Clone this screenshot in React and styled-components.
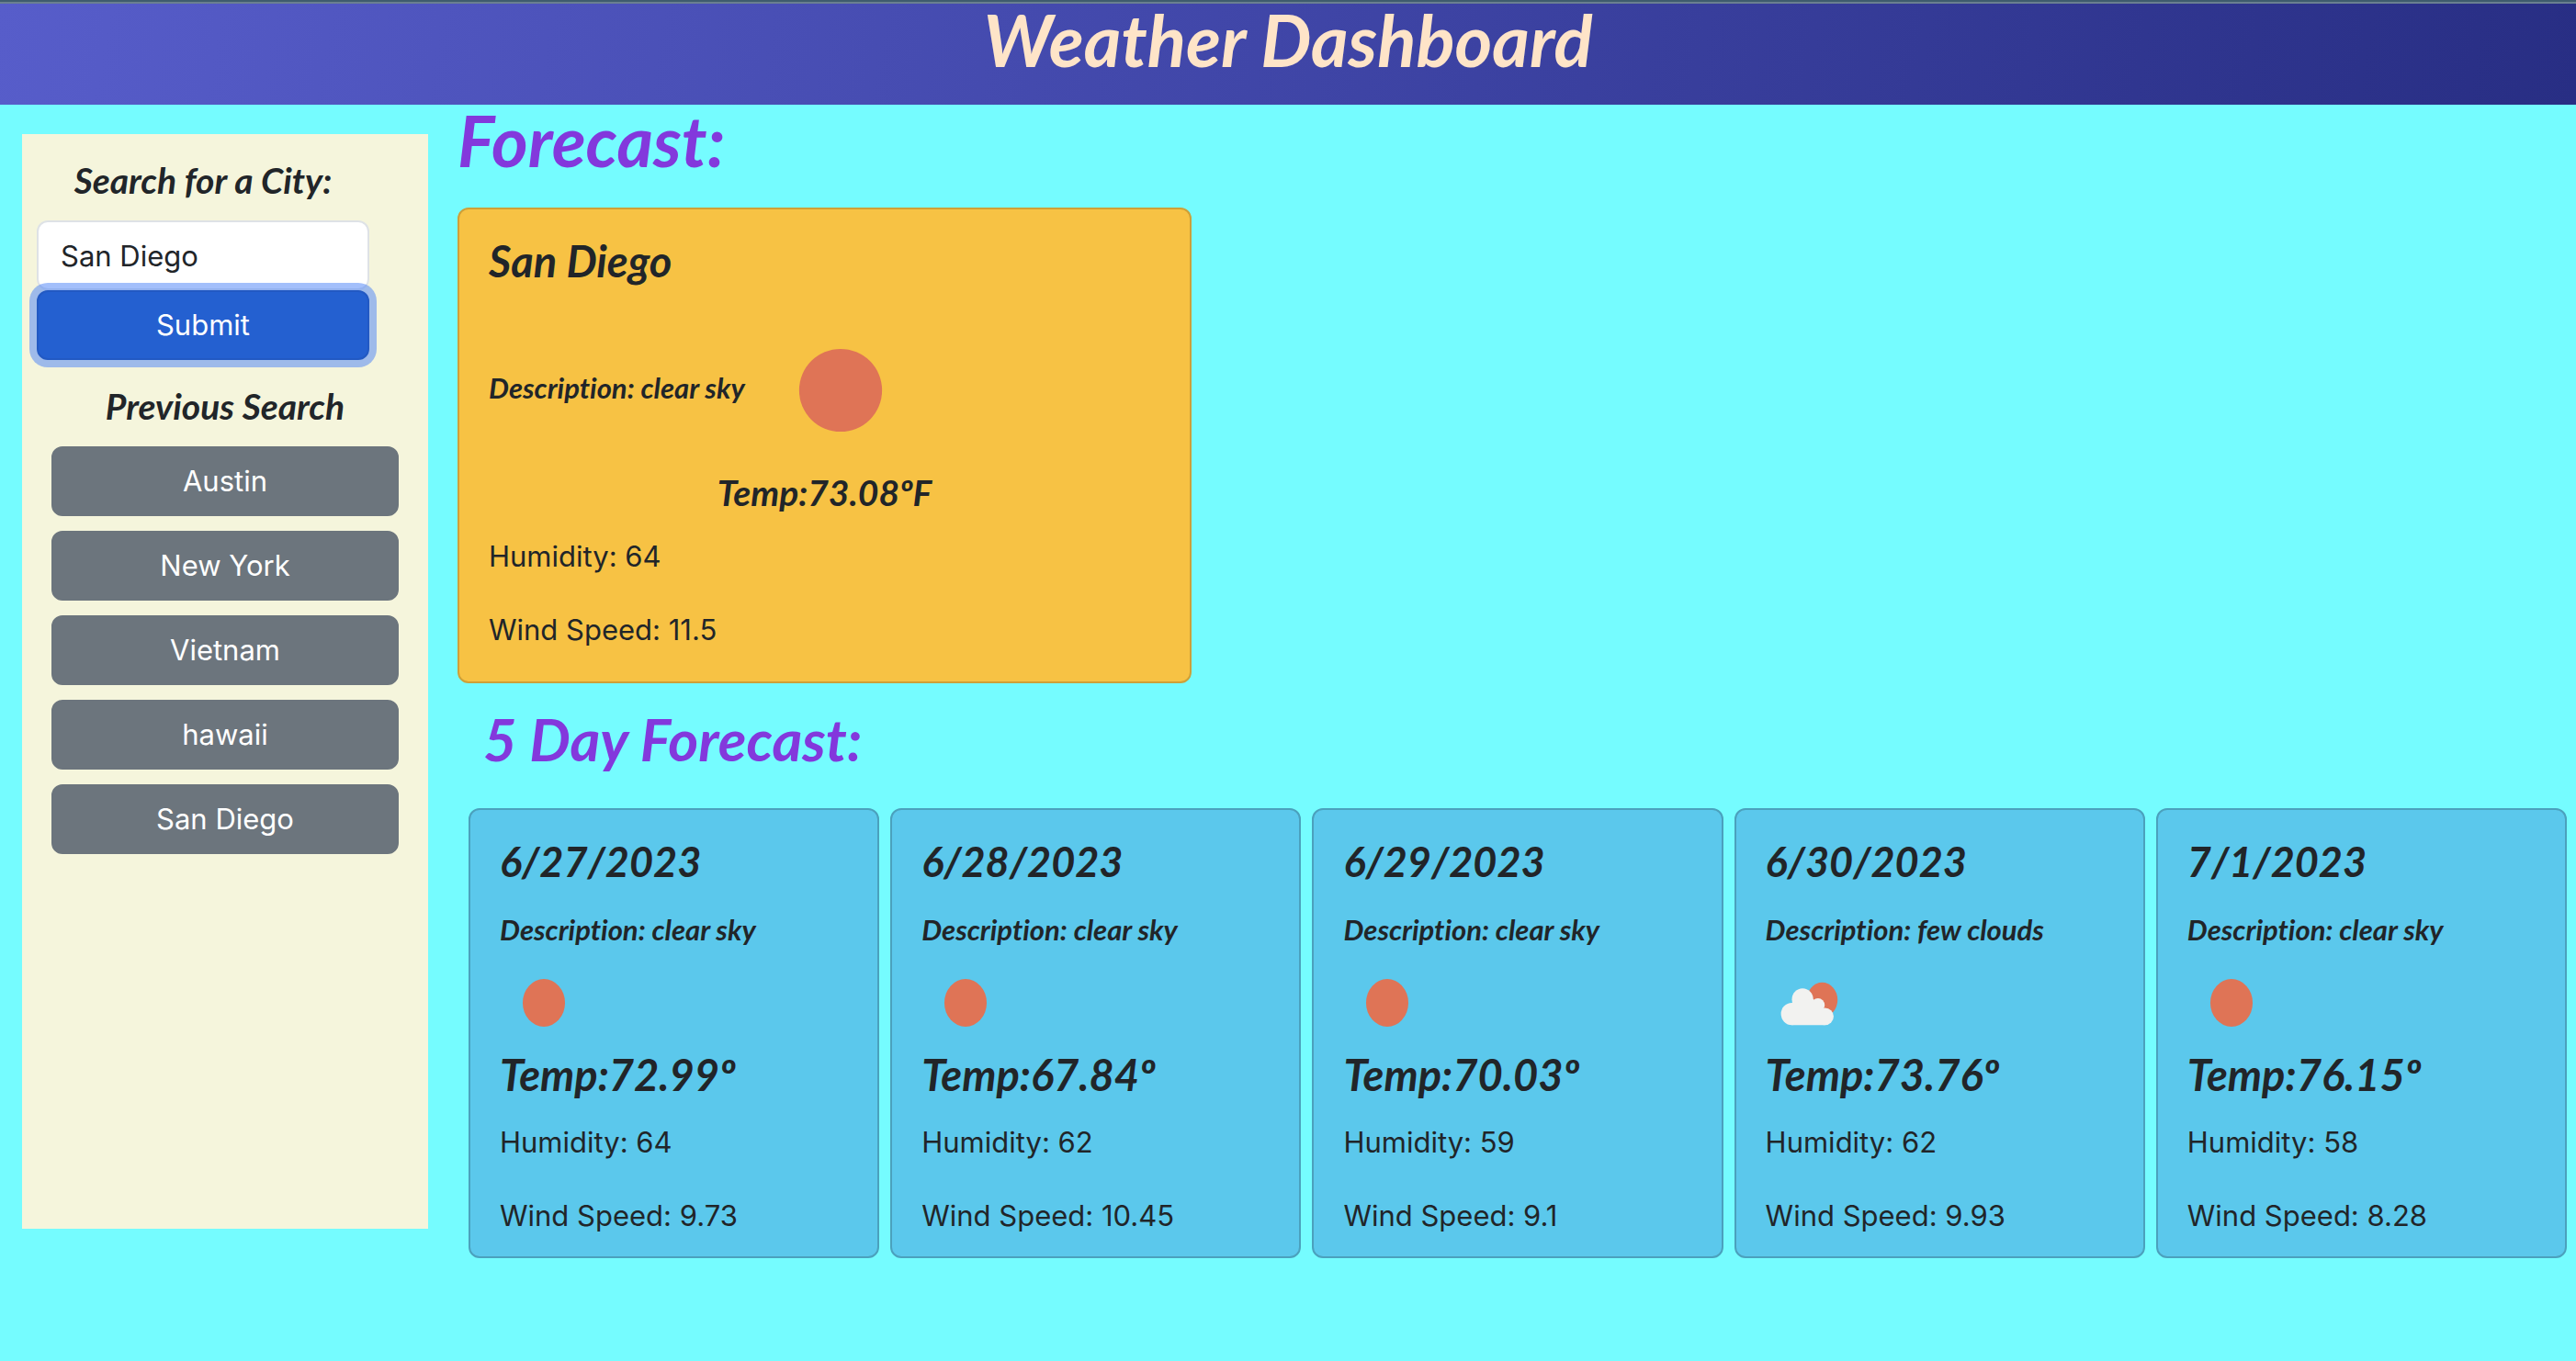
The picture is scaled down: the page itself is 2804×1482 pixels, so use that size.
import React, { useState } from "react";
import styled, { createGlobalStyle, css } from "styled-components";

const GlobalStyle = createGlobalStyle`
  *, *::before, *::after { box-sizing: border-box; }
  body {
    margin: 0;
    min-height: 100vh;
    background: #75fcff;
    color: #212529;
    font: 400 31px/48px Inter, "Liberation Sans", sans-serif;
  }
`;

const heading = css`
  margin: 0;
  font-family: Lato, "Open Sans", sans-serif;
  font-style: italic;
  font-weight: 700;
  font-variant-ligatures: none;
`;

const Header = styled.header`
  height: 114px;
  border-top: 2px solid #3f5c6e;
  background: linear-gradient(100deg, #575dca, #282e84);
  text-align: center;
`;

const Title = styled.h1`
  ${heading}
  border-top: 2px solid #6a8090;
  color: #fee4c8;
  font-size: 78px;
  line-height: 78px;
`;

const Layout = styled.div`
  display: grid;
  grid-template-columns: 442px minmax(0, 1fr);
  gap: 32px;
  align-items: start;
  padding: 0 10px 0 24px;
`;

const Sidebar = styled.aside`
  min-height: 1192px;
  margin-top: 32px;
  padding: 30px 32px 24px 16px;
  background: #f5f5dc;
`;

const SearchForm = styled.form`
  display: flex;
  flex-direction: column;
  margin-right: 32px;
  text-align: center;
`;

const SmallHeading = styled.h5`
  ${heading}
  font-size: 39px;
  line-height: 40px;
  text-align: center;
`;

const Field = styled.input`
  height: 76px;
  margin-top: 24px;
  padding: 12px 24px;
  border: 2px solid #dee2e6;
  border-radius: 12px;
  background: #fff;
  color: inherit;
  font: inherit;
`;

const Button = styled.button`
  height: 76px;
  padding: 12px 24px;
  border: 2px solid #6c757d;
  border-radius: 12px;
  background: #6c757d;
  color: #fff;
  font: inherit;
`;

const SubmitButton = styled(Button)`
  border-color: #2259c3;
  background: #2460d0;
  box-shadow: 0 0 0 8px rgba(72, 127, 247, 0.5);
`;

const History = styled.section`
  padding: 30px 0 0 16px;
`;

const CityList = styled.div`
  display: flex;
  flex-direction: column;
  gap: 16px;
  padding-top: 24px;
`;

const Main = styled.main`
  display: flex;
  flex-direction: column;
`;

const Forecast = styled.h1`
  ${heading}
  padding-bottom: 34px;
  color: #8338dc;
  font-size: 76px;
  line-height: 78px;
`;

const FiveDay = styled.h2`
  ${heading}
  padding: 22px 28px 36px;
  color: #8338dc;
  font-size: 63px;
  line-height: 78px;
`;

const Card = styled.article`
  padding: 32px;
  border: 2px solid;
  border-radius: 12px;
`;

const CardTitle = styled.h4`
  ${heading}
  margin-bottom: 26px;
  font-size: ${(p) => (p.$date ? 45 : 47)}px;
  line-height: 48px;
`;

const Description = styled.h6`
  ${heading}
  padding-bottom: 2px;
  font-size: 31px;
  line-height: 48px;
`;

const Conditions = styled.div`
  display: flex;
  align-items: center;

  ${Description} {
    padding-bottom: 6px;
  }
`;

const CurrentCard = styled(Card)`
  width: 34.8%;
  min-width: 640px;
  border-color: #cda039;
  background: #f7c244;

  ${SmallHeading} {
    margin-bottom: 26px;
  }
`;

const DayCard = styled(Card)`
  padding-bottom: 20px;
  border-color: #4ba1bd;
  background: #5bc8ec;
`;

const Days = styled.div`
  display: grid;
  grid-template-columns: repeat(5, minmax(0, 1fr));
  gap: 12px;
  padding-left: 12px;
`;

const CurrentIcon = styled.svg`
  width: 188px;
  height: 188px;
  margin: -3px 10px;
`;

const DayIcon = styled.svg`
  display: block;
  width: 96px;
  height: 108px;
`;

const Reading = styled.p`
  margin: 0;

  & + & {
    margin-top: 32px;
  }
`;

function WeatherArt({ icon: Icon, kind }) {
  return (
    <Icon viewBox="0 0 100 100" preserveAspectRatio="none" role="img" aria-label={kind}>
      {kind === "few clouds" ? (
        <>
          <circle cx="64" cy="47" r="17.5" fill="#df7456" />
          <g fill="#f2f2f0">
            <ellipse cx="29.6" cy="61.2" rx="12.3" ry="11.2" />
            <ellipse cx="41.8" cy="46.6" rx="12.1" ry="11.2" />
            <ellipse cx="59.3" cy="52.3" rx="7.6" ry="7" />
            <ellipse cx="67.2" cy="63.7" rx="9.8" ry="8.7" />
            <path d="M29.6 50 54 46l7 8 6.2 8v10.4H29.6Z" />
          </g>
        </>
      ) : (
        <circle cx="50" cy="50" r="24" fill="#df7456" />
      )}
    </Icon>
  );
}

const cities = ["Austin", "New York", "Vietnam", "hawaii", "San Diego"];
const days = [
  { date: "6/27/2023", sky: "clear sky", temp: "72.99", humidity: 64, wind: "9.73" },
  { date: "6/28/2023", sky: "clear sky", temp: "67.84", humidity: 62, wind: "10.45" },
  { date: "6/29/2023", sky: "clear sky", temp: "70.03", humidity: 59, wind: "9.1" },
  { date: "6/30/2023", sky: "few clouds", temp: "73.76", humidity: 62, wind: "9.93" },
  { date: "7/1/2023", sky: "clear sky", temp: "76.15", humidity: 58, wind: "8.28" },
];

export default function App() {
  const [city, setCity] = useState("San Diego");
  return (
    <>
      <GlobalStyle />
      <Header>
        <Title>Weather Dashboard</Title>
      </Header>
      <Layout>
        <Sidebar>
          <SearchForm onSubmit={(e) => e.preventDefault()}>
            <SmallHeading as="label" htmlFor="city">Search for a City:</SmallHeading>
            <Field id="city" value={city} onChange={(e) => setCity(e.target.value)} />
            <SubmitButton type="submit">Submit</SubmitButton>
          </SearchForm>
          <History>
            <SmallHeading>Previous Search</SmallHeading>
            <CityList>
              {cities.map((name) => (
                <Button key={name} type="button" onClick={() => setCity(name)}>{name}</Button>
              ))}
            </CityList>
          </History>
        </Sidebar>
        <Main>
          <Forecast>Forecast:</Forecast>
          <CurrentCard>
            <CardTitle>San Diego</CardTitle>
            <Conditions>
              <Description>Description: clear sky</Description>
              <WeatherArt icon={CurrentIcon} kind="clear sky" />
            </Conditions>
            <SmallHeading>Temp:73.08ºF</SmallHeading>
            <Reading>Humidity: 64</Reading>
            <Reading>Wind Speed: 11.5</Reading>
          </CurrentCard>
          <FiveDay>5 Day Forecast:</FiveDay>
          <Days>
            {days.map((day) => (
              <DayCard key={day.date}>
                <CardTitle $date>{day.date}</CardTitle>
                <Description>Description: {day.sky}</Description>
                <WeatherArt icon={DayIcon} kind={day.sky} />
                <CardTitle>Temp:{day.temp}º</CardTitle>
                <Reading>Humidity: {day.humidity}</Reading>
                <Reading>Wind Speed: {day.wind}</Reading>
              </DayCard>
            ))}
          </Days>
        </Main>
      </Layout>
    </>
  );
}
